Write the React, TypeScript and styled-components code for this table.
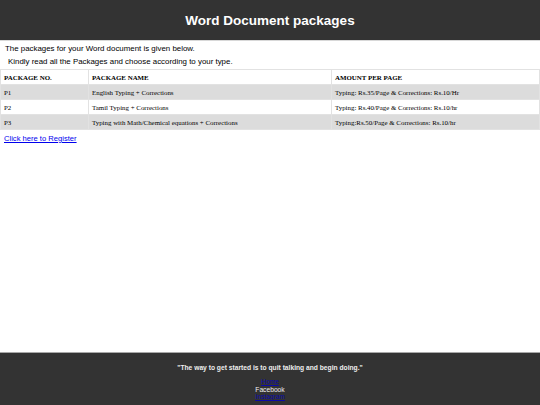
import React from "react";
import styled, { createGlobalStyle } from "styled-components";

const Global = createGlobalStyle`
  html, body { margin: 0; padding: 0; background: #fff; }
  body { font-family: "Liberation Sans", Arial, sans-serif; }
`;

const Page = styled.div`
  min-height: 405px;
  display: flex;
  flex-direction: column;
`;

const Header = styled.header`
  height: 40px;
  background: #333333;
  border-bottom: 1px solid #d8d8d8;
  display: flex;
  align-items: center;
  justify-content: center;
`;

const Title = styled.h1`
  margin: 0;
  color: #ffffff;
  font-size: 13.5px;
  font-weight: bold;
`;

const Intro = styled.p<{ $indent: number }>`
  margin: 0;
  padding-left: ${(p) => p.$indent}px;
  font-size: 7.9px;
  line-height: 13px;
  color: #000;
`;

const IntroBlock = styled.div`
  display: flex;
  flex-direction: column;
  padding-top: 1px;
  margin-bottom: 1px;
`;

const Table = styled.table`
  width: 100%;
  border-collapse: collapse;
  font-family: "Liberation Serif", "Times New Roman", serif;
  font-size: 6.9px;
  color: #000;
`;

const Row = styled.tr<{ $shade?: boolean }>`
  background: ${(p) => (p.$shade ? "#dcdcdc" : "#ffffff")};
`;

const Th = styled.th`
  text-align: left;
  font-weight: bold;
  border: 1px solid #e2e2e2;
  height: 14px;
  padding: 0 3px;
`;

const Td = styled.td`
  text-align: left;
  border: 1px solid #e2e2e2;
  height: 14px;
  padding: 0 3px;
`;

const LinkLine = styled.div`
  padding: 4px 4px 0;
  font-size: 7.6px;
  line-height: 10px;
`;

const Link = styled.a`
  color: #0000ee;
  text-decoration: underline;
`;

const Footer = styled.footer`
  margin-top: auto;
  height: 52px;
  background: #333333;
  border-top: 1px solid #a8a8a8;
  display: flex;
  flex-direction: column;
  align-items: center;
  font-size: 6.7px;
  color: #eeeeee;
`;

const Quote = styled.p`
  margin: 10px 0 0;
  font-weight: bold;
  line-height: 9px;
`;

const FooterLinks = styled.div`
  margin-top: 6px;
  display: flex;
  flex-direction: column;
  align-items: center;
  line-height: 7.6px;
`;

const FooterLink = styled.a`
  color: #0a0aa8;
  text-decoration: underline;
`;

const FooterText = styled.span`
  color: #f2f2f2;
`;

const rows = [
  ["P1", "English Typing + Corrections", "Typing: Rs.35/Page & Corrections: Rs.10/Hr"],
  ["P2", "Tamil Typing + Corrections", "Typing: Rs.40/Page & Corrections: Rs.10/hr"],
  ["P3", "Typing with Math/Chemical equations + Corrections", "Typing:Rs.50/Page & Corrections: Rs.10/hr"],
];

export default function App() {
  return (
    <Page>
      <Global />
      <Header>
        <Title>Word Document packages</Title>
      </Header>
      <IntroBlock>
        <Intro $indent={5}>The packages for your Word document is given below.</Intro>
        <Intro $indent={8}>Kindly read all the Packages and choose according to your type.</Intro>
      </IntroBlock>
      <Table>
        <colgroup>
          <col style={{ width: 88 }} />
          <col style={{ width: 243 }} />
          <col />
        </colgroup>
        <tbody>
          <Row>
            <Th>PACKAGE NO.</Th>
            <Th>PACKAGE NAME</Th>
            <Th>AMOUNT PER PAGE</Th>
          </Row>
          {rows.map((r, i) => (
            <Row key={r[0]} $shade={i % 2 === 0}>
              <Td>{r[0]}</Td>
              <Td>{r[1]}</Td>
              <Td>{r[2]}</Td>
            </Row>
          ))}
        </tbody>
      </Table>
      <LinkLine>
        <Link href="#">Click here to Register</Link>
      </LinkLine>
      <Footer>
        <Quote>"The way to get started is to quit talking and begin doing."</Quote>
        <FooterLinks>
          <FooterLink href="#">Home</FooterLink>
          <FooterText>Facebook</FooterText>
          <FooterLink href="#">Instagram</FooterLink>
        </FooterLinks>
      </Footer>
    </Page>
  );
}
